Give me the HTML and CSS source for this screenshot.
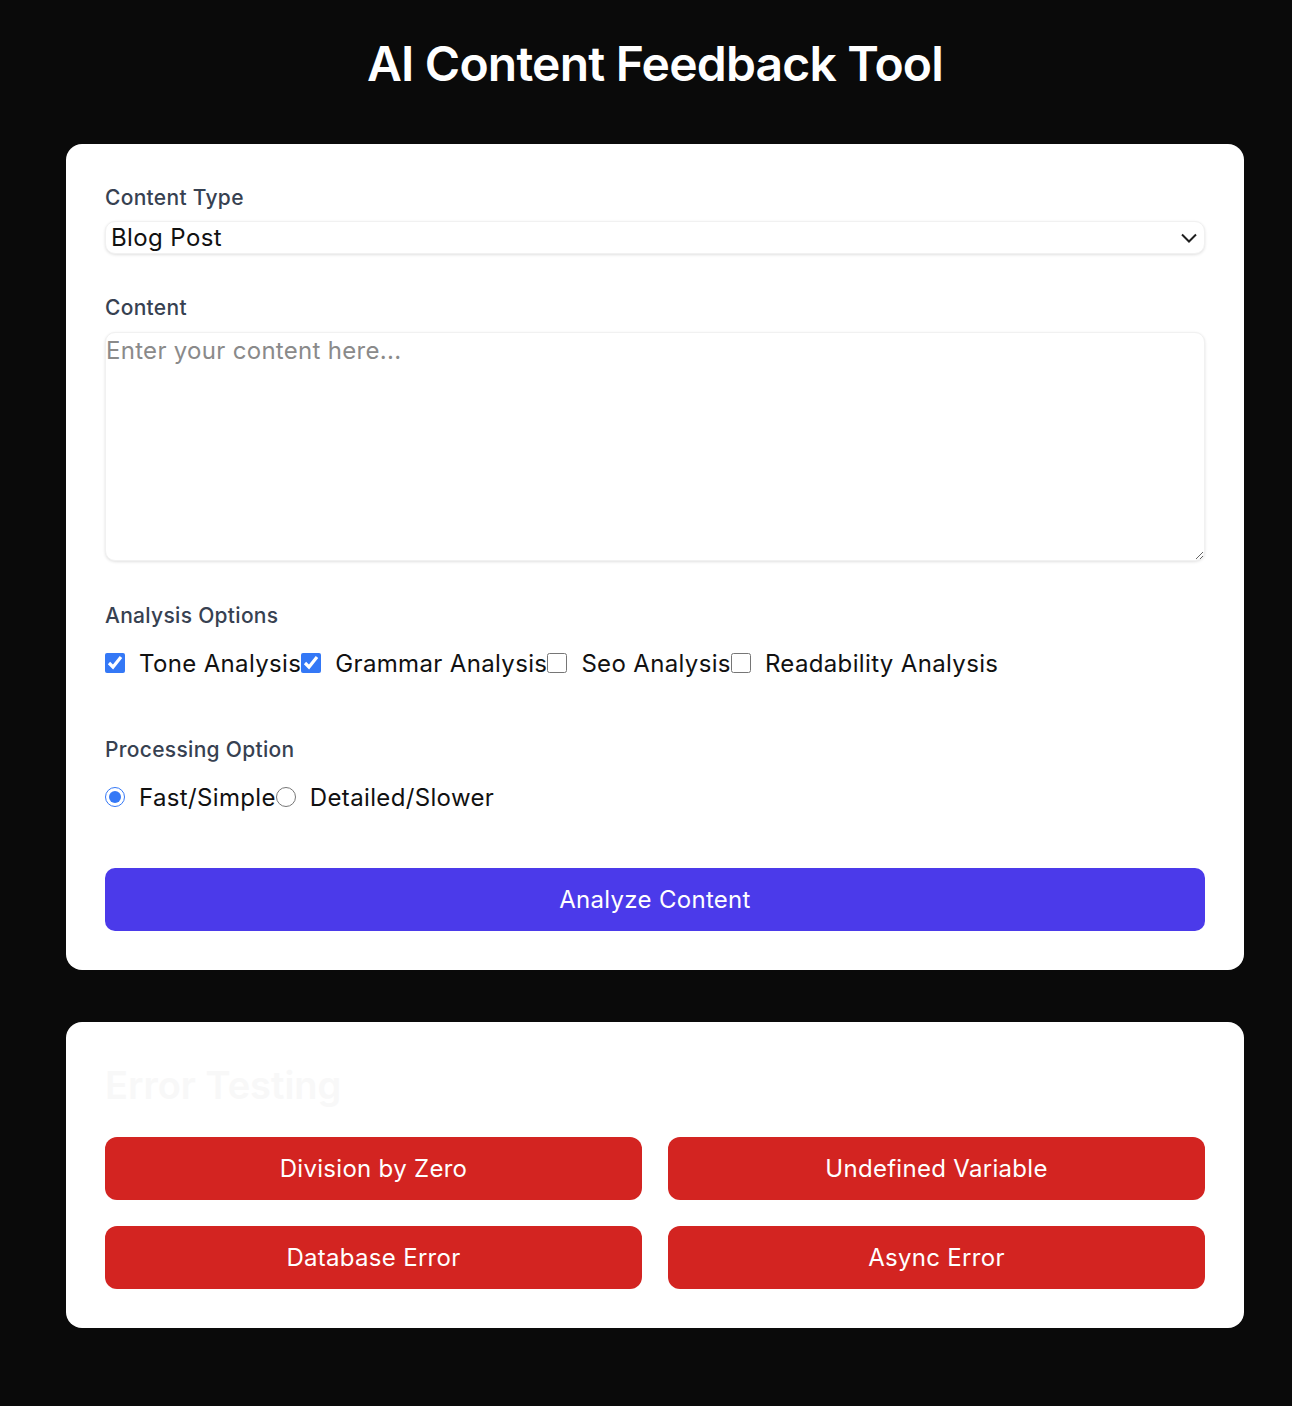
FILE: index.html
```html
<!DOCTYPE html>
<html lang="en">
<head>
<meta charset="utf-8">
<title>AI Content Feedback Tool</title>
<link rel="stylesheet" href="styles.css">
</head>
<body>
<main class="page">
  <h1 class="title">AI Content Feedback Tool</h1>

  <section class="card">
    <div class="field">
      <label class="label" for="ctype">Content Type</label>
      <div class="select-wrap">
        <select id="ctype" class="select">
          <option>Blog Post</option>
          <option>Social Media Post</option>
          <option>Email</option>
        </select>
        <svg class="chev" width="18" height="12" viewBox="0 0 18 12"><path d="M2 2.5 L9 9.5 L16 2.5" fill="none" stroke="#1f1f1f" stroke-width="2"/></svg>
      </div>
    </div>

    <div class="field field-text">
      <label class="label label-text" for="content">Content</label>
      <textarea id="content" class="textarea" placeholder="Enter your content here..."></textarea>
    </div>

    <div class="field field-opts">
      <div class="label">Analysis Options</div>
      <div class="opts">
        <label class="opt"><input type="checkbox" checked><span>Tone Analysis</span></label>
        <label class="opt"><input type="checkbox" checked><span>Grammar Analysis</span></label>
        <label class="opt"><input type="checkbox"><span>Seo Analysis</span></label>
        <label class="opt"><input type="checkbox"><span>Readability Analysis</span></label>
      </div>
    </div>

    <div class="field field-proc">
      <div class="label">Processing Option</div>
      <div class="opts">
        <label class="opt"><input type="radio" name="proc" checked><span>Fast/Simple</span></label>
        <label class="opt"><input type="radio" name="proc"><span>Detailed/Slower</span></label>
      </div>
    </div>

    <button class="btn btn-primary" type="button">Analyze Content</button>
  </section>

  <section class="card card-errors">
    <h2 class="err-title">Error Testing</h2>
    <div class="err-grid">
      <button class="btn btn-danger" type="button">Division by Zero</button>
      <button class="btn btn-danger" type="button">Undefined Variable</button>
      <button class="btn btn-danger" type="button">Database Error</button>
      <button class="btn btn-danger" type="button">Async Error</button>
    </div>
  </section>
</main>
</body>
</html>
```

FILE: styles.css
```css
* { box-sizing: border-box; }

html, body {
  margin: 0;
  padding: 0;
  background: #0a0a0a;
}

body {
  font-family: Inter, "Noto Sans", "Liberation Sans", sans-serif;
  color: #111;
}

.page {
  width: 1178px;
  margin-left: 66px;
  padding-top: 35px;
  padding-bottom: 78px;
}

.title {
  margin: 0 0 51px;
  text-align: center;
  color: #fff;
  font-size: 48px;
  line-height: 58px;
  font-weight: 600;
  letter-spacing: -0.8px;
}

.card {
  background: #fff;
  border-radius: 16px;
  padding: 40px 39px 39px;
}

.card-errors {
  margin-top: 52px;
  padding-top: 40px;
}

.field { margin-bottom: 40px; }
.field-text { margin-bottom: 41px; }
.field-opts { margin-bottom: 58px; }
.field-proc { margin-bottom: 56px; }

.label {
  display: block;
  font-size: 21px;
  line-height: 28px;
  color: #374151;
  font-weight: 500;
  letter-spacing: 0.3px;
  margin-bottom: 9px;
}
.label-text { margin-bottom: 10px; }

.select-wrap { position: relative; }

.select {
  display: block;
  width: 100%;
  height: 33px;
  appearance: none;
  -webkit-appearance: none;
  border: 1px solid #f1f1f1;
  border-radius: 10px;
  background: #fff;
  box-shadow: 0 1px 3px rgba(0,0,0,0.12);
  font-family: inherit;
  font-size: 24px;
  letter-spacing: 0.4px;
  color: #111;
  padding: 0 40px 0 5px;
  outline: none;
}

.chev {
  position: absolute;
  right: 7px;
  top: 11px;
  pointer-events: none;
}

.textarea {
  display: block;
  width: 100%;
  height: 229px;
  border: 1px solid #f1f1f1;
  border-radius: 10px;
  box-shadow: 0 1px 3px rgba(0,0,0,0.12);
  font-family: inherit;
  font-size: 24px;
  letter-spacing: 0.3px;
  line-height: 32px;
  padding: 2px 0 0 0;
  resize: vertical;
  outline: none;
  color: #111;
}
.textarea::placeholder { color: #8a8a8a; }

.field-opts .label { margin-bottom: 18px; }
.field-proc .label { margin-bottom: 18px; }

.opts {
  display: flex;
  align-items: center;
}

.opt {
  display: flex;
  align-items: center;
  height: 30px;
  font-size: 24px;
  letter-spacing: 0.35px;
  color: #111;
}

.opt input {
  margin: 0 14px 0 0;
  width: 20px;
  height: 20px;
  accent-color: #3478f6;
}

.btn {
  display: flex;
  align-items: center;
  justify-content: center;
  width: 100%;
  height: 63px;
  border: 0;
  color: #fff;
  font-family: inherit;
  font-size: 24px;
  letter-spacing: 0.3px;
  cursor: pointer;
}

.btn-primary {
  background: #4b3aea;
  border-radius: 10px;
}

.err-title {
  margin: 0 0 29px;
  font-size: 38px;
  line-height: 46px;
  font-weight: 600;
  color: #f8f8f8;
}

.err-grid {
  display: grid;
  grid-template-columns: 1fr 1fr;
  gap: 26px;
}

.btn-danger {
  background: #d32421;
  border-radius: 12px;
}
```
